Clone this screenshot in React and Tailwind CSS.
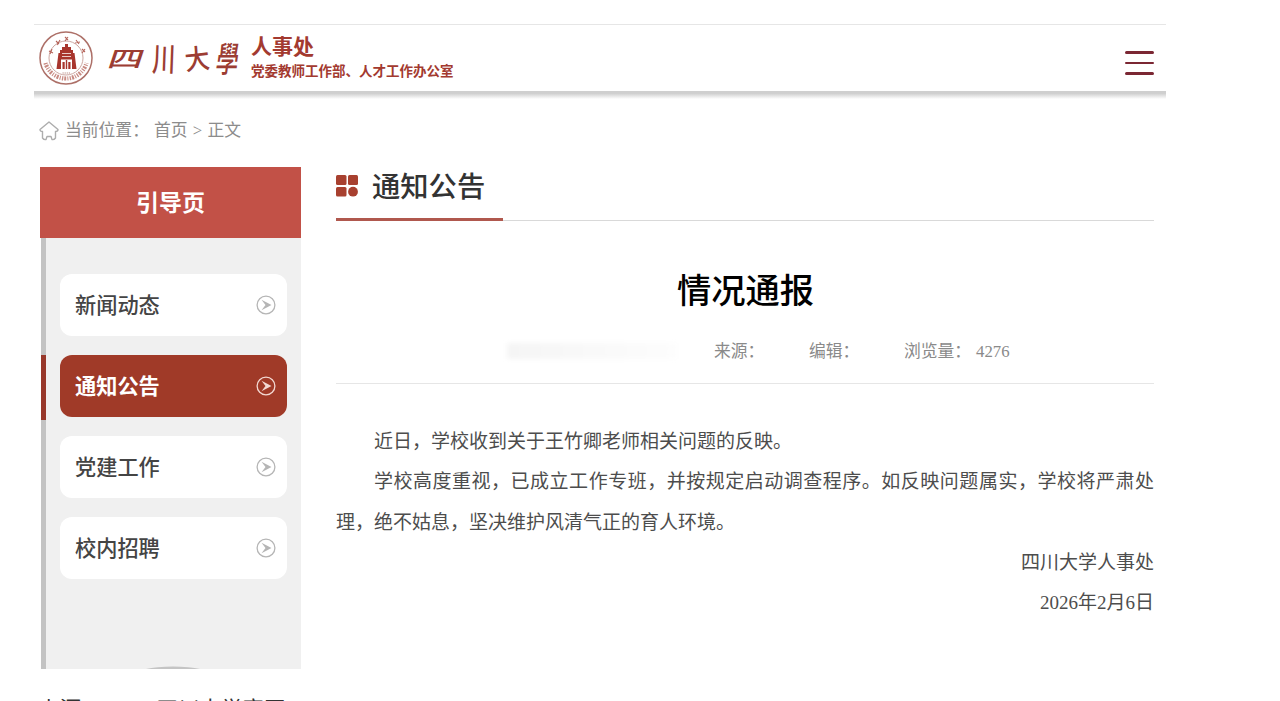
const MENU = [
    { label: '新闻动态' },
    { label: '通知公告', active: true },
    { label: '党建工作' },
    { label: '校内招聘' },
];

const Seal = () => (
    <svg className="h-14 w-14 shrink-0" viewBox="0 0 56 56" fill="none">
        <circle cx="28" cy="28" r="26" stroke="#ad7068" strokeWidth="1.5" />
        <circle cx="28" cy="28" r="17" stroke="#cda8a2" strokeWidth="1" />
        {/* lettering ring */}
        <path d="M7.5 33 A21.3 21.3 0 0 0 48.5 33" stroke="#b5645a" strokeWidth="4.2" strokeDasharray="1.3 1 2 1.2 1 1.3" opacity="0.75" />
        <path
            d="M11 21 l4 2 m-1-4 l-2 5 M18 11 l3 3 m1-4 l-3 5 M27 7 l3 3 m0-3 l-3 4 M38 10 l3 4 m-4-1 l5-1 M44 19 l3 3 m-3 1 l3-4"
            stroke="#b5645a"
            strokeWidth="1.1"
        />
        {/* gate tower */}
        <path d="M27 14h3v3h3v3h2v3h1.500l2 16H34V29.500H23V39h-4.500l2-16H22v-3h2v-3h3z" fill="#a8352d" />
        <path d="M24.500 32h2.200v7h-2.200zM30.300 32h2.200v7h-2.200zM27.800 30h1.400v9h-1.400z" fill="#a8352d" />
        <path d="M24 23.500h9M24 26.500h9" stroke="#f3dedb" strokeWidth="0.900" />
        <path d="M24.500 43h8" stroke="#b98a83" strokeWidth="1.200" strokeDasharray="1.200 0.900" />
    </svg>
);

const ArrowIcon = ({ active }) => (
    <svg className={`h-5 w-5 ${active ? 'text-[#f3d9d3]' : 'text-[#b5b5b5]'}`} viewBox="0 0 20 20" fill="none">
        <circle cx="10" cy="10" r="8.900" stroke="currentColor" strokeWidth="1.300" />
        <path d="M5.500 4.800 L15.500 10 L5.500 15.200 L9.500 10 Z" fill="currentColor" />
    </svg>
);

const Header = () => (
    <header className="flex h-[67px] items-start justify-between border-t border-[#e6e6e6] pr-3 pl-1">
        <div className="flex pt-[5px]">
            <Seal />
            <div className={'ml-[13px] flex h-[54px] items-center font-["Noto_Sans_CJK_TC",sans-serif] leading-none font-medium text-[#9c3d33]'}>
                <span className="w-[40px] -skew-x-12 scale-x-140 scale-y-90 text-center text-[25px]">四</span>
                <span className="ml-[3px] w-[28px] -skew-x-3 scale-x-90 scale-y-125 text-center text-[26px]">川</span>
                <span className="ml-[5px] w-[28px] -rotate-6 scale-y-110 text-center text-[25px]">大</span>
                <span className="ml-[3px] w-[28px] -skew-x-12 scale-x-90 scale-y-140 text-center text-[25px]">學</span>
            </div>
            <div className={'ml-[9px] pt-[3px] font-["Noto_Sans_CJK_SC",sans-serif] font-bold text-[#a33a30]'}>
                <div className="text-[21px] leading-[25px]">人事处</div>
                <div className="text-[13.5px] leading-[25px]">党委教师工作部、人才工作办公室</div>
            </div>
        </div>
        <div className="mt-[26px] flex w-[29px] flex-col gap-[8px]">
            <span className="h-[2.500px] rounded-full bg-[#7b2733]" />
            <span className="h-[2.500px] rounded-full bg-[#7b2733]" />
            <span className="h-[2.500px] rounded-full bg-[#7b2733]" />
        </div>
    </header>
);

const Sidebar = () => (
    <aside className="ml-[6px] w-[261px] shrink-0">
        <div className="flex h-[71px] items-center justify-center bg-[#c25147] pt-[3px] text-[23px] font-bold text-white">
            引导页
        </div>
        <div className="ml-px flex h-[431px] flex-col justify-between border-l-[5px] border-[#c3c3c3] bg-[#f0f0f0]">
            <div className="mt-[36px] flex flex-col gap-[19px]">
                {MENU.map((item) => (
                    <div key={item.label} className="relative pr-[14px] pl-[14px]">
                        {item.active && <span className="absolute top-0 -left-[5px] h-[65px] w-[5px] bg-[#98382b]" />}
                        <div
                            className={`flex h-[62px] items-center justify-between rounded-xl pr-[11px] pl-[15px] text-[21.200px] ${
                                item.active ? 'bg-[#a03a28] font-bold text-white' : 'bg-white font-medium text-[#444]'
                            }`}
                        >
                            <span className="pt-[3px]">{item.label}</span>
                            <ArrowIcon active={item.active} />
                        </div>
                    </div>
                ))}
            </div>
            <svg className="ml-[97px] h-[3px] w-[60px]" viewBox="0 0 60 3">
                <ellipse cx="30" cy="10" rx="40" ry="9.500" fill="#c4c4c4" />
            </svg>
        </div>
    </aside>
);

const Article = () => (
    <section className="mt-px ml-[35px] w-[818px]">
        <div className="flex h-[53px] border-b border-[#d9d9d9]">
            <h2 className="-mb-px flex h-[53px] w-[167px] items-start border-b-[3px] border-[#b0584e] text-[28.300px] leading-[38px] font-medium text-[#333]">
                <svg className="mt-[7px] mr-[14px] h-[22px] w-[22px]" viewBox="0 0 22 22" fill="#a8402f">
                    <rect width="10.500" height="10" rx="1.500" />
                    <rect x="12" width="10" height="10" rx="1.500" />
                    <rect y="12" width="10.500" height="9.500" rx="1.500" />
                    <circle cx="17" cy="16.700" r="4.900" />
                </svg>
                <span className="mt-px whitespace-nowrap">通知公告</span>
            </h2>
        </div>
        <h1 className="mt-[45px] pl-px text-center text-[34.300px] leading-[50px] font-medium text-black">情况通报</h1>
        <div className="mt-[23px] flex h-[45px] border-b border-[#e6e6e6] text-[16.800px] leading-[26px] text-[#8a8a8a]">
            {/* publish date, hidden */}
            <span className="mt-[4px] ml-[171px] h-[16px] w-[170px] bg-linear-to-r from-[#f5f5f5] to-[#fdfdfd] blur-[2px]" />
            <span className="ml-[37px] w-[95px]">来源：</span>
            <span className="w-[95px]">编辑：</span>
            <span className="w-[72px] whitespace-nowrap">浏览量：</span>
            <span>4276</span>
        </div>
        <div className="mt-[38px] text-[19px] leading-[40.300px] text-[#4d4d4d]">
            <p className="indent-[2em]">近日，学校收到关于王竹卿老师相关问题的反映。</p>
            <p className="text-justify indent-[2em]">
                学校高度重视，已成立工作专班，并按规定启动调查程序。如反映问题属实，学校将严肃处理，绝不姑息，坚决维护风清气正的育人环境。
            </p>
            <p className="text-right">四川大学人事处</p>
            <p className="text-right">2026年2月6日</p>
        </div>
    </section>
);

export default function App() {
    return (
        <div lang="zh-CN" className={'h-[701px] overflow-hidden bg-white font-["Liberation_Serif","Noto_Sans_CJK_SC",serif]'}>
            <div className="ml-[34px] w-[1132px] pt-6">
                <Header />
                <div className="h-[8px] bg-linear-to-b from-[#cfcfcf] from-30% to-white" />
                <nav className="mt-[19px] flex h-[26px] items-center pl-[5px] text-[16.800px] text-[#8c8c8c]">
                    <svg className="mr-[6px] h-5 w-5" viewBox="0 0 20 20" fill="none" stroke="#adadad" strokeWidth="1.400" strokeLinejoin="round">
                        <path d="M10 1 L19 8.500 Q19 10.500 16.500 10.500 L16.500 17 Q15 19 13 18.500 L12 15.500 H8 L7 18.500 Q5 19 3.500 17 L3.500 10.500 Q1 10.500 1 8.500 Z" />
                    </svg>
                    <span className="w-[89px] whitespace-nowrap">当前位置：</span>
                    <span className="[word-spacing:1px]">首页 &gt; 正文</span>
                </nav>
                <main className="mt-[23px] flex h-[502px]">
                    <Sidebar />
                    <Article />
                </main>
                <p className="mt-[24px] flex gap-[54px] pl-1 text-[21.500px] leading-[34px] text-[#333]">
                    <span>来源：</span>
                    <span>四川大学官网</span>
                </p>
            </div>
        </div>
    );
}
